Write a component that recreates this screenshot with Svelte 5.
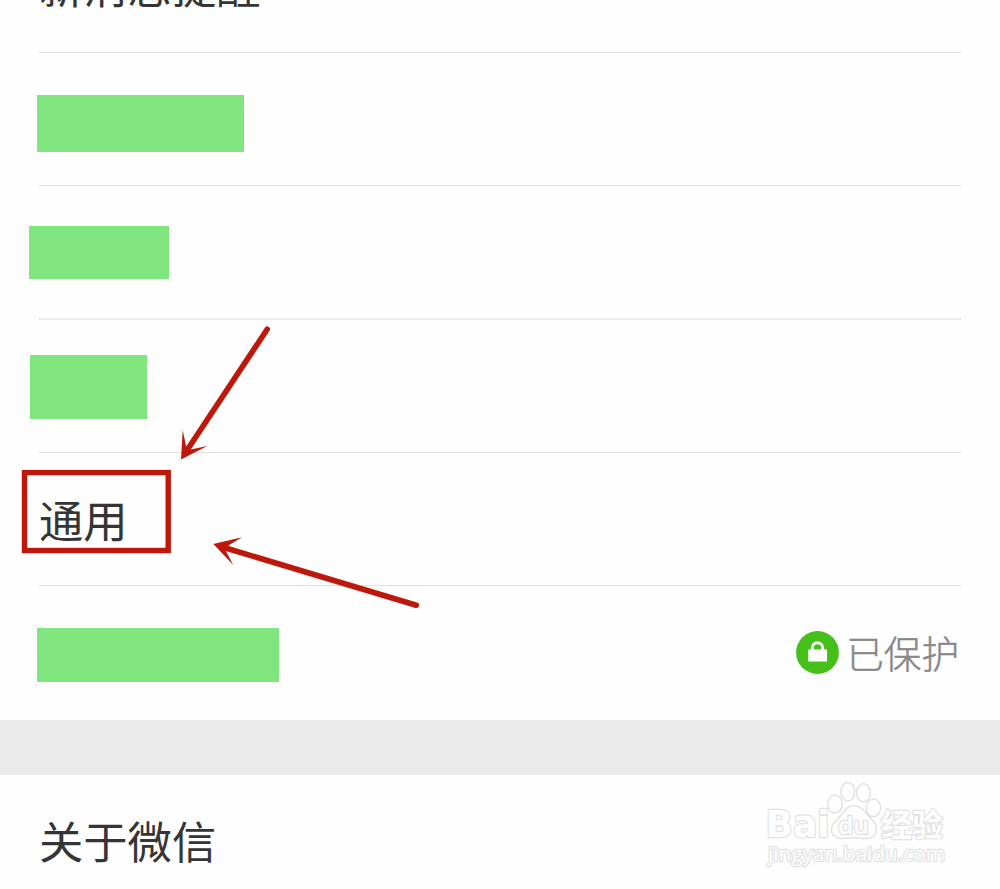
<script lang="ts">
  type Row = {
    label?: string;
    // size and offsets of the block that hides a private label
    mask?: { width: number; height: number; top: number; left: number };
    height: number;
    status?: string;
    soft?: boolean;
  };

  const rows: Row[] = [
    { label: "新消息提醒", height: 53 },
    { mask: { width: 207.5, height: 57, top: 42, left: -2.5 }, height: 133 },
    { mask: { width: 140, height: 53, top: 40, left: -10 }, height: 134, soft: true },
    { mask: { width: 117, height: 64, top: 35, left: -9 }, height: 133 },
    { label: "通用", height: 133 },
    { mask: { width: 242.5, height: 54, top: 42, left: -2.5 }, height: 134, status: "已保护" },
  ];
</script>

<main class="screen">
  <section class="group">
    {#each rows as row}
      <div class="row" class:soft={row.soft} style:height="{row.height}px">
        {#if row.label}
          <span class="label">{row.label}</span>
        {:else if row.mask}
          <span
            class="mask"
            style:width="{row.mask.width}px"
            style:height="{row.mask.height}px"
            style:margin-top="{row.mask.top}px"
            style:margin-left="{row.mask.left}px"
          ></span>
        {/if}
        {#if row.status}
          <span class="status">
            <svg width="43" height="43" viewBox="0 0 43 43" aria-hidden="true">
              <circle cx="21.5" cy="21.5" r="21.4" fill="#45c01a" />
              <path d="M16.3 19.5v-2.6a5.2 5.2 0 0 1 10.4 0v2.6" fill="none" stroke="#fff" stroke-width="3" />
              <rect x="12.2" y="18.5" width="18.8" height="12" fill="#fff" />
            </svg>
            <span>{row.status}</span>
          </span>
        {/if}
      </div>
    {/each}
  </section>

  <div class="gap"></div>

  <section class="group">
    <div class="row about">
      <span class="label">关于微信</span>
    </div>
  </section>

  <!-- frame and arrows pointing at the "通用" row -->
  <svg class="overlay" width="1000" height="889" viewBox="0 0 1000 889">
    <g fill="none" stroke="#bd180b">
      <rect x="24.5" y="472.6" width="143.7" height="77.9" stroke-width="5.4" />
      <path d="M267.2 329.3L187.5 449.5" stroke-width="5.6" stroke-linecap="round" />
      <path d="M416.3 605.2L226.5 548.3" stroke-width="5.6" stroke-linecap="round" />
    </g>
    <g fill="#bd180b">
      <path d="M181 459.5L182.7 430L186.3 447.3L190.7 449.5L207.3 446Z" />
      <path d="M213.3 544L242 537.2L228 545.7L226 551.3L233.3 565Z" />
    </g>

    <g class="watermark">
      <text class="brand" x="765.5" y="837" font-size="38" textLength="64" lengthAdjust="spacingAndGlyphs">Bai</text>
      <ellipse cx="835" cy="804" rx="7.2" ry="9" />
      <ellipse cx="847.8" cy="791.8" rx="6.9" ry="9.3" />
      <ellipse cx="863.5" cy="792.8" rx="6.9" ry="9" />
      <ellipse cx="873.5" cy="807.8" rx="7.2" ry="8.8" />
      <path d="M854 805.5C847 805.5 844.5 811 840 816.5C836.5 821 831.5 823 831.5 829.5C831.5 835 835.5 838.5 841 838.5C846 838.5 849 837.8 854 837.8C859 837.8 861 839 867 838.5C873 838 876.5 834.5 876.5 829C876.5 823.5 872.5 820.5 869 816.5C864.5 811.5 861 805.5 854 805.5Z" />
      <text x="838" y="833.5" font-size="24" font-weight="600" textLength="31" lengthAdjust="spacingAndGlyphs">du</text>
      <text class="cjk" x="881" y="835.5" font-size="31" font-weight="700">经验</text>
      <text x="768" y="861" font-size="20.5" textLength="177" lengthAdjust="spacingAndGlyphs">jingyan.baidu.com</text>
    </g>
  </svg>
</main>

<style>
  :global(body) {
    margin: 0;
    background: #fefefe;
  }

  .screen {
    position: relative;
    width: 1000px;
    height: 889px;
    overflow: hidden;
    background: #fefefe;
    color: #353535;
    font-family: "Noto Sans CJK SC", sans-serif;
  }

  .group {
    padding: 0 39px;
  }

  .row {
    display: flex;
    box-sizing: border-box;
    align-items: flex-start;
    justify-content: space-between;
    border-bottom: 1px solid #e0e0e0;
  }

  .row.soft {
    border-bottom: 2px solid #ececec;
  }

  .row:last-child {
    border-bottom: none;
  }

  .label {
    align-self: center;
    font-size: 44.3px;
    line-height: 60px;
    white-space: nowrap;
  }

  .row:first-child:not(.about) .label {
    margin-top: -83px;
  }

  .mask {
    background: #80e57f;
  }

  .status {
    display: flex;
    align-items: center;
    gap: 7px;
    margin-top: 41px;
    margin-right: 2px;
    color: #888;
    font-size: 37.6px;
    font-weight: 300;
    line-height: 50px;
    -webkit-text-stroke: 0.5px #888;
  }

  .gap {
    height: 55px;
    background: #eaeaea;
  }

  .about {
    height: 129px;
  }

  .overlay {
    position: absolute;
    inset: 0;
    pointer-events: none;
  }

  .watermark {
    fill: #fefefe;
    stroke: #e2e2e2;
    stroke-width: 1.5;
    font-family: "Open Sans", "Noto Sans", sans-serif;
  }

  .watermark text {
    paint-order: stroke;
    stroke-width: 2.4;
    stroke-linejoin: round;
  }

  .watermark .brand {
    font-family: "DejaVu Sans", sans-serif;
    font-weight: 700;
  }

  .watermark .cjk {
    font-family: "Noto Sans CJK SC", sans-serif;
  }
</style>
